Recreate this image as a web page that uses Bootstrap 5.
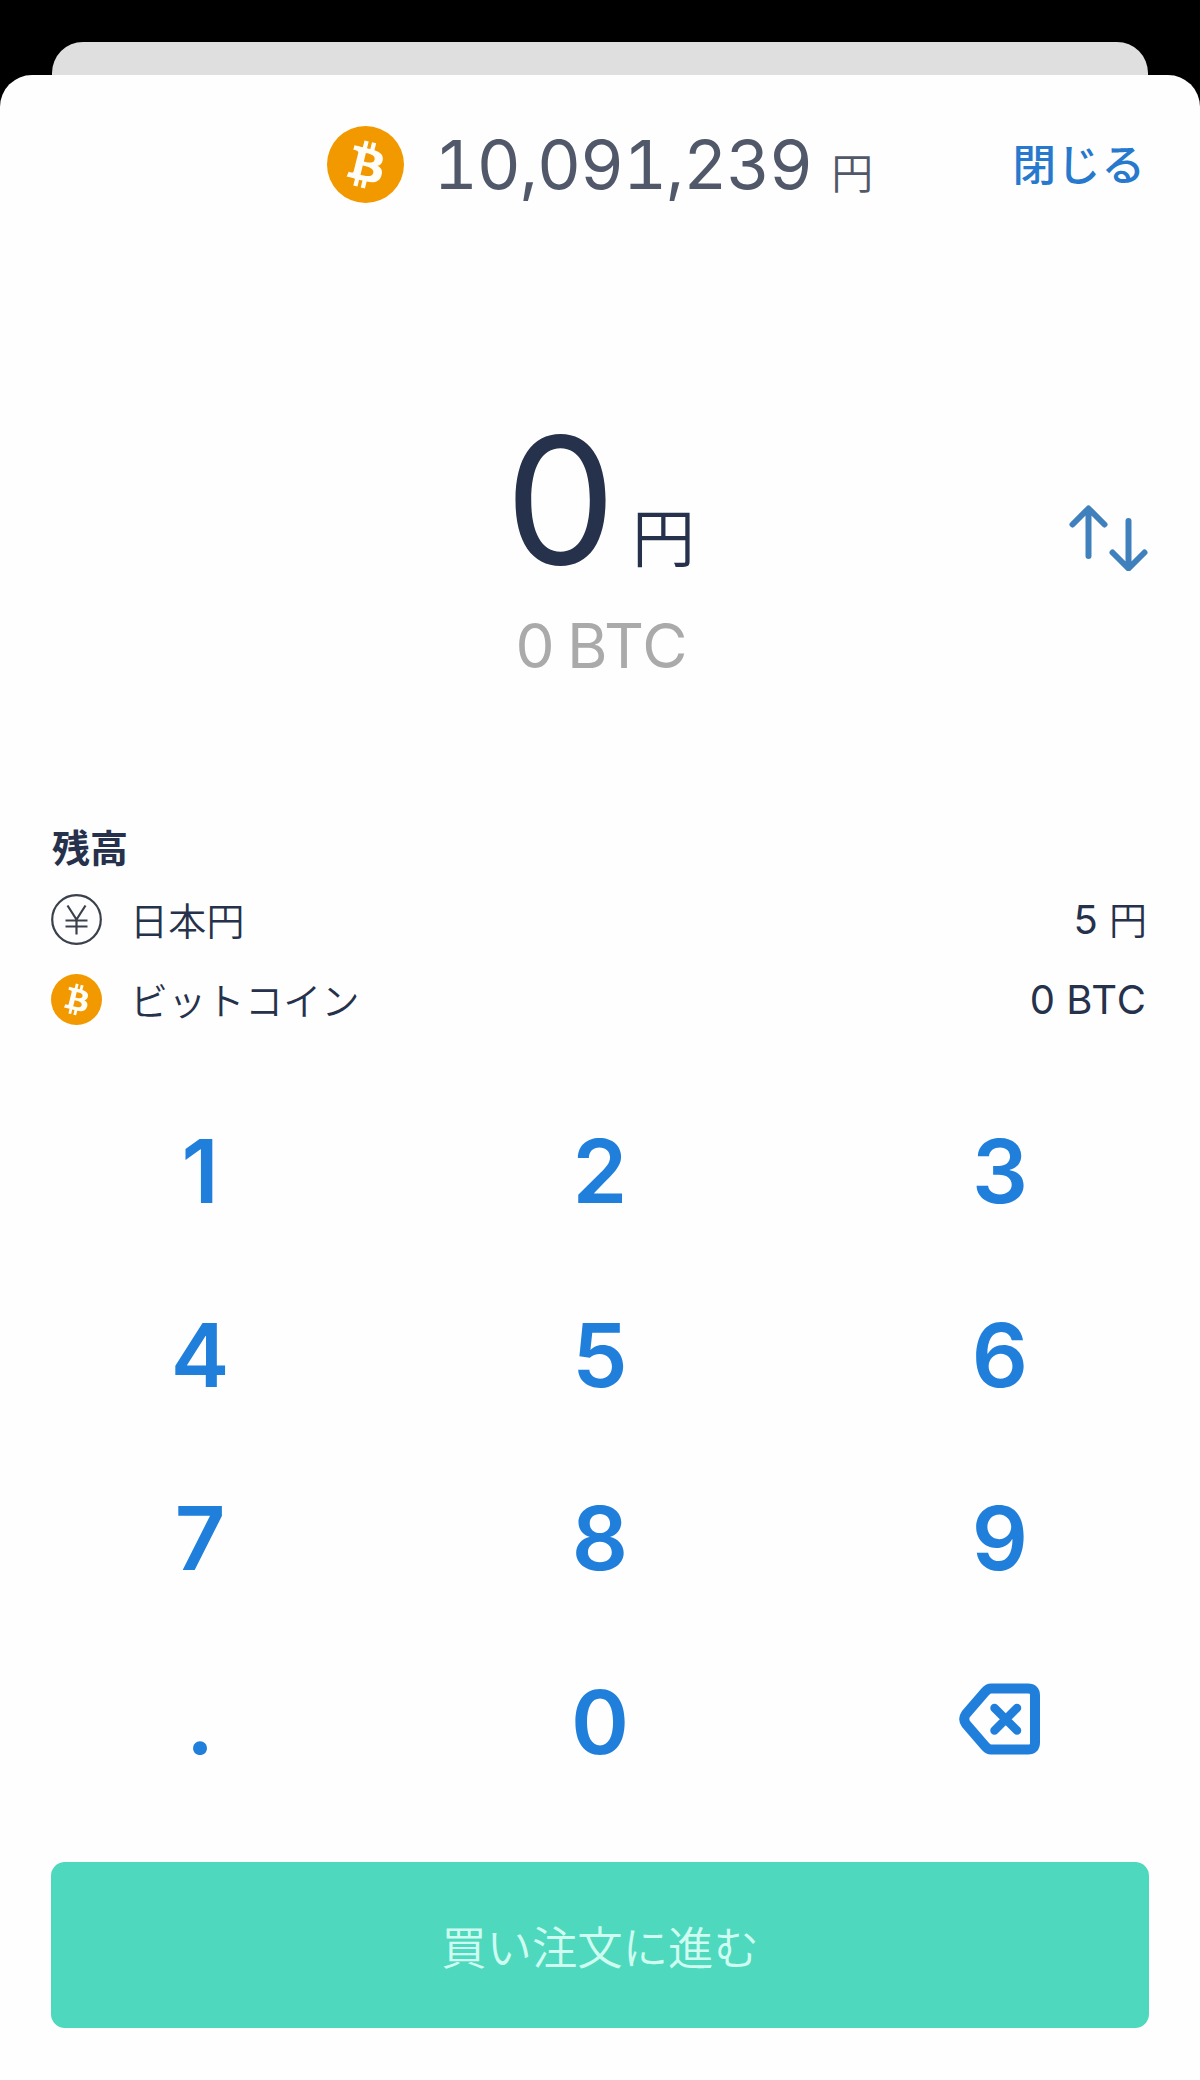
<!DOCTYPE html>
<html lang="ja">
<head>
<meta charset="utf-8">
<meta name="viewport" content="width=device-width, initial-scale=1">
<title>ビットコイン購入</title>
<link href="https://cdn.jsdelivr.net/npm/bootstrap@5.3.0/dist/css/bootstrap.min.css" rel="stylesheet">
<style>
body{background:#000;font-family:Inter,"Noto Sans CJK JP",sans-serif;color:#26314b;line-height:1}
.backdrop{padding-top:42px;min-height:2080px}
.sheet-back{height:33px;margin:0 52px;background:#dfdfdf;border-radius:31px 31px 0 0}
.sheet{height:2005px;background:#fefefe;border-radius:32px 32px 0 0;padding:0 51px 52px}
.jp{font-family:"Noto Sans CJK JP",sans-serif}
.top-bar{height:178px;display:grid;grid-template-columns:1fr auto 1fr}
.coin-lg{width:77px;height:77px}
.coin-sm{width:51px;height:51px}
.rate{font-size:68px;font-variant-numeric:tabular-nums;letter-spacing:-1.1px;color:#51586a;margin-left:30px}
.rate-unit{font-size:42px;font-weight:350;margin-left:19px;color:#51586a}
.close-link{font-size:43.5px;font-weight:500;color:#2679cd;letter-spacing:1px;padding:0 3px 3px 0}
.amount{height:410px;margin-top:147px}
.amount-value{font-size:176px}
.amount-line{line-height:200px;height:200px}
.amount-unit{font-size:63px;font-weight:350;line-height:1;vertical-align:3px;margin-left:16px}
.amount-sub{font-size:62px;color:#aaa;word-spacing:-5px;margin-top:15px;padding-left:3px}
.swap{width:80px;height:70px;margin-top:101px}
.balance{font-size:38px;padding-right:2px}
.balance-title{font-size:38px;line-height:66px;padding:3px 0 0 1px}
.bal-row{height:80px}
.bal-name{margin-left:28px;font-weight:350;letter-spacing:.3px}
.bal-num{font-family:Inter,sans-serif;font-size:40px;padding-top:1px}
.bal-btc{letter-spacing:1px;word-spacing:-2px}
.bal-yen{font-size:38px;font-weight:350}
.keypad{margin:38px -51px 0}
.pad-key{height:183.5px;font-size:88px;font-weight:600;color:#217fdc;padding:5px 0 0;border:0}
.buy{height:166px;border-radius:14px;background:#4ed8bd;color:#cffcf1;font-size:45.4px;font-weight:350}
</style>
<script src="https://cdn.jsdelivr.net/npm/bootstrap@5.3.0/dist/js/bootstrap.bundle.min.js"></script>
</head>
<body>
<svg width="0" height="0" class="position-absolute" aria-hidden="true">
<symbol id="btc" viewBox="0 0 32 32"><circle cx="16" cy="16" r="16" fill="#f29900"/><path fill="#fffdf8" d="M23.189 14.02c.314-2.096-1.283-3.223-3.465-3.975l.708-2.84-1.728-.43-.69 2.765c-.454-.114-.92-.22-1.385-.326l.695-2.783L15.596 6l-.708 2.839c-.376-.086-.746-.17-1.104-.26l.002-.009-2.384-.595-.46 1.846s1.283.294 1.256.312c.7.175.826.638.805 1.006l-.806 3.235c.048.012.11.03.18.057l-.183-.045-1.13 4.532c-.086.212-.303.531-.793.41.018.025-1.256-.313-1.256-.313l-.858 1.978 2.25.561c.418.105.828.215 1.231.318l-.715 2.872 1.727.43.708-2.84c.472.127.93.245 1.378.357l-.706 2.828 1.728.43.715-2.866c2.948.558 5.164.333 6.097-2.333.752-2.146-.037-3.385-1.588-4.192 1.13-.26 1.98-1.003 2.207-2.538zm-3.95 5.538c-.533 2.147-4.148.986-5.32.695l.95-3.805c1.172.293 4.929.872 4.37 3.11zm.535-5.569c-.487 1.953-3.495.96-4.47.717l.86-3.45c.975.243 4.118.696 3.61 2.733z"/></symbol>
</svg>
<div class="backdrop">
<div class="sheet-back"></div>
<main class="sheet d-flex flex-column">
  <header class="top-bar align-items-center">
    <span></span>
    <div class="d-flex align-items-center">
      <svg class="coin-lg"><use href="#btc"/></svg>
      <div class="d-flex align-items-baseline"><span class="rate">10,091,239</span><span class="rate-unit jp">円</span></div>
    </div>
    <a href="#" class="close-link jp text-decoration-none text-end">閉じる</a>
  </header>

  <section class="amount row g-0">
    <div class="col-2"></div>
    <div class="col-8 text-center">
      <div class="amount-line"><span class="amount-value">0</span><span class="amount-unit jp">円</span></div>
      <div class="amount-sub">0 BTC</div>
    </div>
    <div class="col-2 text-end">
      <svg class="swap" viewBox="0 0 80 70" fill="none" stroke="#3f80bd" stroke-width="6" stroke-linecap="round" stroke-linejoin="round"><path d="M19.500 55V8M3.500 23.500l16-16 16 16M59.500 20v47M43.500 51.500l16 16 16-16"/></svg>
    </div>
  </section>

  <section class="balance jp">
    <h2 class="balance-title jp fw-bold m-0">残高</h2>
    <div class="bal-row d-flex align-items-center">
      <svg class="coin-sm" viewBox="0 0 51 51" fill="none" stroke="#3b414c" stroke-width="2.200"><circle cx="25.500" cy="25.500" r="24.300"/><path d="M16.500 11.500l9 14L34.500 11.500M25.500 25.500v15M14.500 26.500h22M14.500 32.500h22"/></svg>
      <span class="bal-name">日本円</span>
      <span class="bal-num ms-auto">5 <span class="bal-yen jp">円</span></span>
    </div>
    <div class="bal-row d-flex align-items-center">
      <svg class="coin-sm"><use href="#btc"/></svg>
      <span class="bal-name">ビットコイン</span>
      <span class="bal-num bal-btc ms-auto">0 BTC</span>
    </div>
  </section>

  <section class="keypad row g-0">
    <button class="btn pad-key col-4">1</button><button class="btn pad-key col-4">2</button><button class="btn pad-key col-4">3</button>
    <button class="btn pad-key col-4">4</button><button class="btn pad-key col-4">5</button><button class="btn pad-key col-4">6</button>
    <button class="btn pad-key col-4">7</button><button class="btn pad-key col-4">8</button><button class="btn pad-key col-4">9</button>
    <button class="btn pad-key col-4">.</button><button class="btn pad-key col-4">0</button>
    <button class="btn pad-key col-4 pt-0 d-flex align-items-center justify-content-center" aria-label="削除"><svg width="82" height="72" viewBox="0 0 82 72" fill="none" stroke="#217fdc" stroke-linecap="round" stroke-linejoin="round"><path stroke-width="10" d="M32 5.500H69Q76 5.500 76 12.500V59.500Q76 66.500 69 66.500H32Q29 66.500 26 63L7 41Q3.500 36 7 31L26 9Q29 5.500 32 5.500Z"/><path stroke-width="8.500" d="M35.500 25L58 47.500M58 25L35.500 47.500"/></svg></button>
  </section>
  <button class="btn buy jp w-100 p-0 border-0 mt-auto">買い注文に進む</button>
</main>
</div>
</body>
</html>
